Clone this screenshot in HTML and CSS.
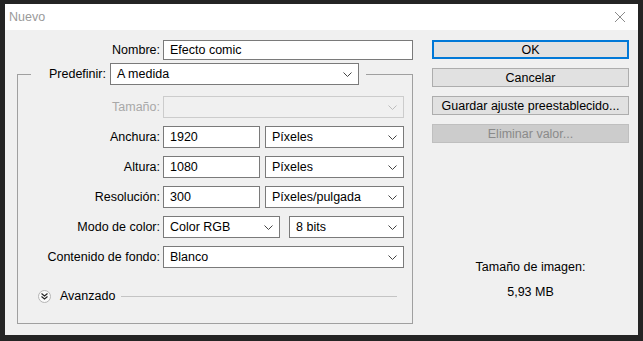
FILE: index.html
```html
<!DOCTYPE html>
<html lang="es">
<head>
    <meta charset="UTF-8">
    <title>Nuevo</title>
    <link rel="stylesheet" href="styles.css">
</head>
<body>

    <div class="window">
        <!-- barra de título -->
        <div class="titlebar">
            <span class="title">Nuevo</span>
            <svg class="close" width="12" height="12" viewBox="0 0 12 12">
                <path d="M1 1L11 11M11 1L1 11" stroke="#8a8a8a" stroke-width="1"/>
            </svg>
        </div>

        <div class="content">
            <div class="form">
                <div class="name-row">
                    <span class="lbl">Nombre:</span>
                    <div class="field name-field">Efecto comic</div>
                </div>

                <fieldset class="group">
                    <legend class="preset">
                        <span class="preset-lbl">Predefinir:</span>
                        <div class="select preset-select">A medida
                            <svg class="chev" width="9" height="5" viewBox="0 0 9 5"><path d="M0.5 0.5L4.5 4.5L8.5 0.5" fill="none" stroke="#444"/></svg>
                        </div>
                    </legend>

                    <div class="row">
                        <span class="lbl off">Tamaño:</span>
                        <div class="select full disabled">
                            <svg class="chev" width="9" height="5" viewBox="0 0 9 5"><path d="M0.5 0.5L4.5 4.5L8.5 0.5" fill="none" stroke="#bdbdbd"/></svg>
                        </div>
                    </div>

                    <div class="row">
                        <span class="lbl">Anchura:</span>
                        <div class="field num">1920</div>
                        <div class="select unit">Píxeles
                            <svg class="chev" width="9" height="5" viewBox="0 0 9 5"><path d="M0.5 0.5L4.5 4.5L8.5 0.5" fill="none" stroke="#444"/></svg>
                        </div>
                    </div>

                    <div class="row">
                        <span class="lbl">Altura:</span>
                        <div class="field num">1080</div>
                        <div class="select unit">Píxeles
                            <svg class="chev" width="9" height="5" viewBox="0 0 9 5"><path d="M0.5 0.5L4.5 4.5L8.5 0.5" fill="none" stroke="#444"/></svg>
                        </div>
                    </div>

                    <div class="row">
                        <span class="lbl">Resolución:</span>
                        <div class="field num">300</div>
                        <div class="select unit">Píxeles/pulgada
                            <svg class="chev" width="9" height="5" viewBox="0 0 9 5"><path d="M0.5 0.5L4.5 4.5L8.5 0.5" fill="none" stroke="#444"/></svg>
                        </div>
                    </div>

                    <div class="row">
                        <span class="lbl">Modo de color:</span>
                        <div class="select mode">Color RGB
                            <svg class="chev" width="9" height="5" viewBox="0 0 9 5"><path d="M0.5 0.5L4.5 4.5L8.5 0.5" fill="none" stroke="#444"/></svg>
                        </div>
                        <div class="select bits">8 bits
                            <svg class="chev" width="9" height="5" viewBox="0 0 9 5"><path d="M0.5 0.5L4.5 4.5L8.5 0.5" fill="none" stroke="#444"/></svg>
                        </div>
                    </div>

                    <div class="row">
                        <span class="lbl">Contenido de fondo:</span>
                        <div class="select full">Blanco
                            <svg class="chev" width="9" height="5" viewBox="0 0 9 5"><path d="M0.5 0.5L4.5 4.5L8.5 0.5" fill="none" stroke="#444"/></svg>
                        </div>
                    </div>

                    <div class="advanced">
                        <span class="adv-icon">
                            <svg width="7" height="7" viewBox="0 0 7 7"><path d="M0.5 0.5L3.5 3L6.5 0.5M0.5 3.5L3.5 6L6.5 3.5" fill="none" stroke="#222" stroke-width="1.1"/></svg>
                        </span>
                        <span class="adv-text">Avanzado</span>
                        <span class="adv-line"></span>
                    </div>
                </fieldset>
            </div>

            <div class="side">
                <div class="btn primary">OK</div>
                <div class="btn">Cancelar</div>
                <div class="btn">Guardar ajuste preestablecido...</div>
                <div class="btn disabled">Eliminar valor...</div>

                <div class="info">
                    <div>Tamaño de imagen:</div>
                    <div class="size">5,93 MB</div>
                </div>
            </div>
        </div>
    </div>

</body>
</html>
```

FILE: styles.css
```css
body {
    margin: 0;
    background-color: #242424;
    font-family: "Liberation Sans", Arial, sans-serif;
    font-size: 12.5px;
    color: #000;
}
.window {
    margin: 4px 5px;
    width: 633px;
    height: 331px;
    background-color: #f0f0f0;
}
.titlebar {
    height: 26px;
    background-color: #fff;
    display: flex;
    align-items: center;
    justify-content: space-between;
    padding: 0 12px 0 4px;
}
.title {
    color: #9a9a9a;
}
.content {
    display: flex;
    padding: 10px 0 0 12px;
}
.form {
    width: 396px;
}
.name-row {
    display: flex;
    align-items: center;
    height: 20px;
}
.lbl {
    width: 143px;
    text-align: right;
    margin-right: 3px;
    flex: none;
}
.lbl.off {
    color: #a8a8a8;
}
.field, .select {
    box-sizing: border-box;
    height: 22px;
    background-color: #fff;
    border: 1px solid #7a7a7a;
    padding: 0 6px;
    display: flex;
    align-items: center;
    flex: none;
}
.name-field {
    width: 250px;
    height: 20px;
}
.chev {
    margin-left: auto;
}
.group {
    margin: 3px 0 0;
    padding: 15px 0 20px;
    width: 396px;
    box-sizing: border-box;
    border: 1px solid #a0a0a0;
    min-width: 0;
}
.preset {
    display: flex;
    align-items: center;
    margin-left: 13px;
    margin-bottom: -4px;
    padding: 0 7px 0 0;
}
.preset-lbl {
    width: 75px;
    text-align: right;
    margin-right: 4px;
}
.preset-select {
    width: 249px;
}
.row {
    display: flex;
    align-items: center;
    margin-bottom: 8px;
    margin-left: -1px;
}
.full {
    width: 241px;
}
.disabled {
    background-color: #f0f0f0;
    border-color: #cccccc;
}
.num {
    width: 97px;
}
.unit {
    width: 139px;
    margin-left: 5px;
}
.mode {
    width: 117px;
}
.bits {
    width: 115px;
    margin-left: 9px;
}
.advanced {
    display: flex;
    align-items: center;
    margin: 21px 15px 0 20px;
}
.adv-icon {
    width: 13px;
    height: 13px;
    box-sizing: border-box;
    border-radius: 50%;
    border: 1px solid #b5b5b5;
    background-color: #fafafa;
    display: flex;
    align-items: center;
    justify-content: center;
}
.adv-text {
    margin: 0 6px 0 9px;
}
.adv-line {
    flex: 1;
    height: 1px;
    background-color: #c4c4c4;
}
.side {
    width: 197px;
    margin-left: 19px;
}
.btn {
    box-sizing: border-box;
    height: 19px;
    margin-bottom: 9px;
    border: 1px solid #adadad;
    background-color: #e1e1e1;
    display: flex;
    align-items: center;
    justify-content: center;
}
.btn.primary {
    border: 2px solid #0078d7;
}
.btn.disabled {
    background-color: #cccccc;
    border-color: #bfbfbf;
    color: #8a8a8a;
}
.info {
    margin-top: 112px;
    text-align: center;
    line-height: 25px;
}
```
